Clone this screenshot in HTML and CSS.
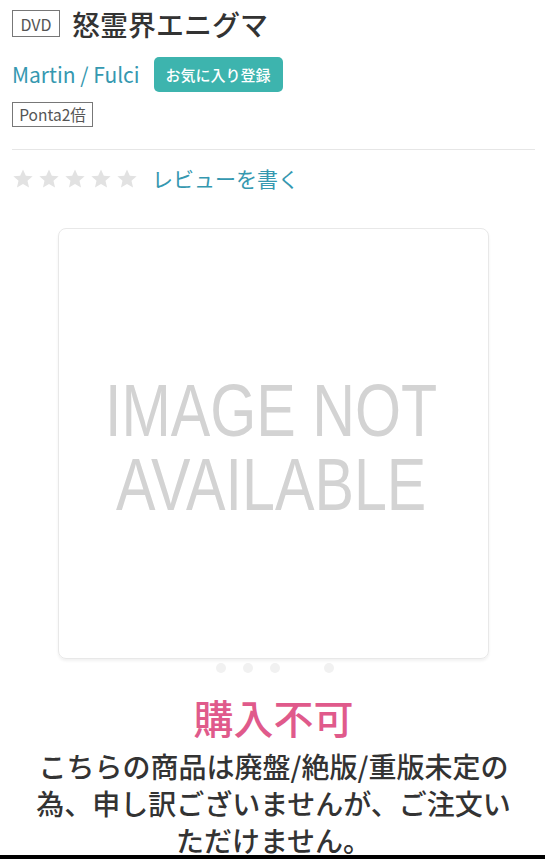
FILE: index.html
```html
<!DOCTYPE html>
<html lang="ja">
<head>
<meta charset="utf-8">
<title>怒霊界エニグマ</title>
<link rel="stylesheet" href="styles.css">
</head>
<body>
<main class="page">
  <div class="title-row">
    <span class="format-tag">DVD</span>
    <h1 class="title">怒霊界エニグマ</h1>
  </div>
  <div class="artist-row">
    <a class="artist" href="#">Martin / Fulci</a>
    <button class="fav-btn" type="button">お気に入り登録</button>
  </div>
  <div class="tags">
    <span class="ponta-tag">Ponta2倍</span>
  </div>
  <hr class="divider">
  <div class="rating-row">
    <div class="stars">
      <svg class="star" viewBox="0 0 24 24"><path d="M12 1.5l3.1 7 7.4.6-5.6 4.9 1.7 7.4L12 17.5l-6.6 3.9 1.7-7.4-5.6-4.9 7.4-.6z"/></svg>
      <svg class="star" viewBox="0 0 24 24"><path d="M12 1.5l3.1 7 7.4.6-5.6 4.9 1.7 7.4L12 17.5l-6.6 3.9 1.7-7.4-5.6-4.9 7.4-.6z"/></svg>
      <svg class="star" viewBox="0 0 24 24"><path d="M12 1.5l3.1 7 7.4.6-5.6 4.9 1.7 7.4L12 17.5l-6.6 3.9 1.7-7.4-5.6-4.9 7.4-.6z"/></svg>
      <svg class="star" viewBox="0 0 24 24"><path d="M12 1.5l3.1 7 7.4.6-5.6 4.9 1.7 7.4L12 17.5l-6.6 3.9 1.7-7.4-5.6-4.9 7.4-.6z"/></svg>
      <svg class="star" viewBox="0 0 24 24"><path d="M12 1.5l3.1 7 7.4.6-5.6 4.9 1.7 7.4L12 17.5l-6.6 3.9 1.7-7.4-5.6-4.9 7.4-.6z"/></svg>
    </div>
    <a class="review-link" href="#">レビューを書く</a>
  </div>
  <div class="image-box">
    <p class="noimage">IMAGE NOT<br>AVAILABLE</p>
  </div>
  <div class="dots">
    <span class="dot"></span>
    <span class="dot"></span>
    <span class="dot"></span>
    <span class="dot dot-active"></span>
    <span class="dot"></span>
  </div>
  <p class="status">購入不可</p>
  <p class="notice">こちらの商品は廃盤/絶版/重版未定の為、申し訳ございませんが、ご注文いただけません。</p>
</main>
<div class="bottom-bar"></div>
</body>
</html>
```
FILE: styles.css
```css
* { box-sizing: border-box; }

html, body {
  margin: 0;
  padding: 0;
  background: #fff;
}

body {
  font-family: "Noto Sans CJK JP", "Noto Sans", sans-serif;
  color: #333;
  overflow: hidden;
}

.page {
  padding: 10px 10px 0 12px;
}

.title-row {
  display: flex;
  align-items: center;
  gap: 12px;
  height: 27px;
}

.format-tag {
  display: flex;
  align-items: center;
  justify-content: center;
  width: 48px;
  height: 27px;
  border: 1px solid #777;
  color: #555;
  font-size: 16px;
  line-height: 1;
}

.title {
  margin: 0;
  font-size: 28px;
  font-weight: 500;
  line-height: 1;
  color: #333;
}

.artist-row {
  display: flex;
  align-items: center;
  gap: 14px;
  margin-top: 20px;
  height: 35px;
}

.artist {
  color: #3598b0;
  text-decoration: none;
  font-size: 21px;
  line-height: 1;
}

.fav-btn {
  height: 35px;
  width: 129px;
  padding: 0;
  border: none;
  border-radius: 5px;
  background: #3db4ae;
  color: #fff;
  font-family: inherit;
  font-size: 15px;
  font-weight: 500;
  line-height: 1;
}

.tags {
  margin-top: 10px;
  display: flex;
}

.ponta-tag {
  display: flex;
  align-items: center;
  justify-content: center;
  width: 81px;
  height: 25px;
  border: 1px solid #777;
  color: #555;
  font-size: 15.5px;
  line-height: 1;
}

.divider {
  margin: 22px 0 0 0;
  border: none;
  height: 1px;
  background: #e6e6e6;
}

.rating-row {
  display: flex;
  align-items: center;
  gap: 14px;
  margin-top: 17px;
  height: 23px;
}

.stars {
  display: flex;
  gap: 4px;
}

.star {
  width: 22px;
  height: 22px;
  fill: #e2e2e2;
}

.review-link {
  color: #3598b0;
  text-decoration: none;
  font-size: 21px;
  line-height: 1;
}

.image-box {
  margin: 38px auto 0;
  width: 431px;
  height: 431px;
  border: 1px solid #e8e8e8;
  border-radius: 8px;
  box-shadow: 0 2px 3px rgba(0, 0, 0, 0.06);
  display: flex;
  align-items: center;
  justify-content: center;
}

.noimage {
  margin: 8px 0 0;
  padding-right: 5px;
  text-align: center;
  font-family: "Liberation Sans", Arial, sans-serif;
  font-size: 74px;
  line-height: 74px;
  color: #d3d3d3;
  white-space: nowrap;
  transform: scaleX(0.8);
}

.dots {
  display: flex;
  justify-content: center;
  gap: 17px;
  margin-top: 4px;
  height: 10px;
  padding-left: 2px;
}

.dot {
  width: 10px;
  height: 10px;
  border-radius: 50%;
  background: #f1f1f1;
}

.dot-active {
  background: #fff;
}

.status {
  margin: 24px 0 0;
  text-align: center;
  font-size: 40px;
  line-height: 40px;
  font-weight: 500;
  color: #e05a8b;
}

.notice {
  margin: 11px auto 0;
  max-width: 485px;
  text-align: center;
  font-size: 28px;
  line-height: 37px;
  font-weight: 500;
  color: #333;
}

.bottom-bar {
  position: fixed;
  left: 0;
  right: 0;
  bottom: 0;
  height: 4px;
  background: #000;
}
```
